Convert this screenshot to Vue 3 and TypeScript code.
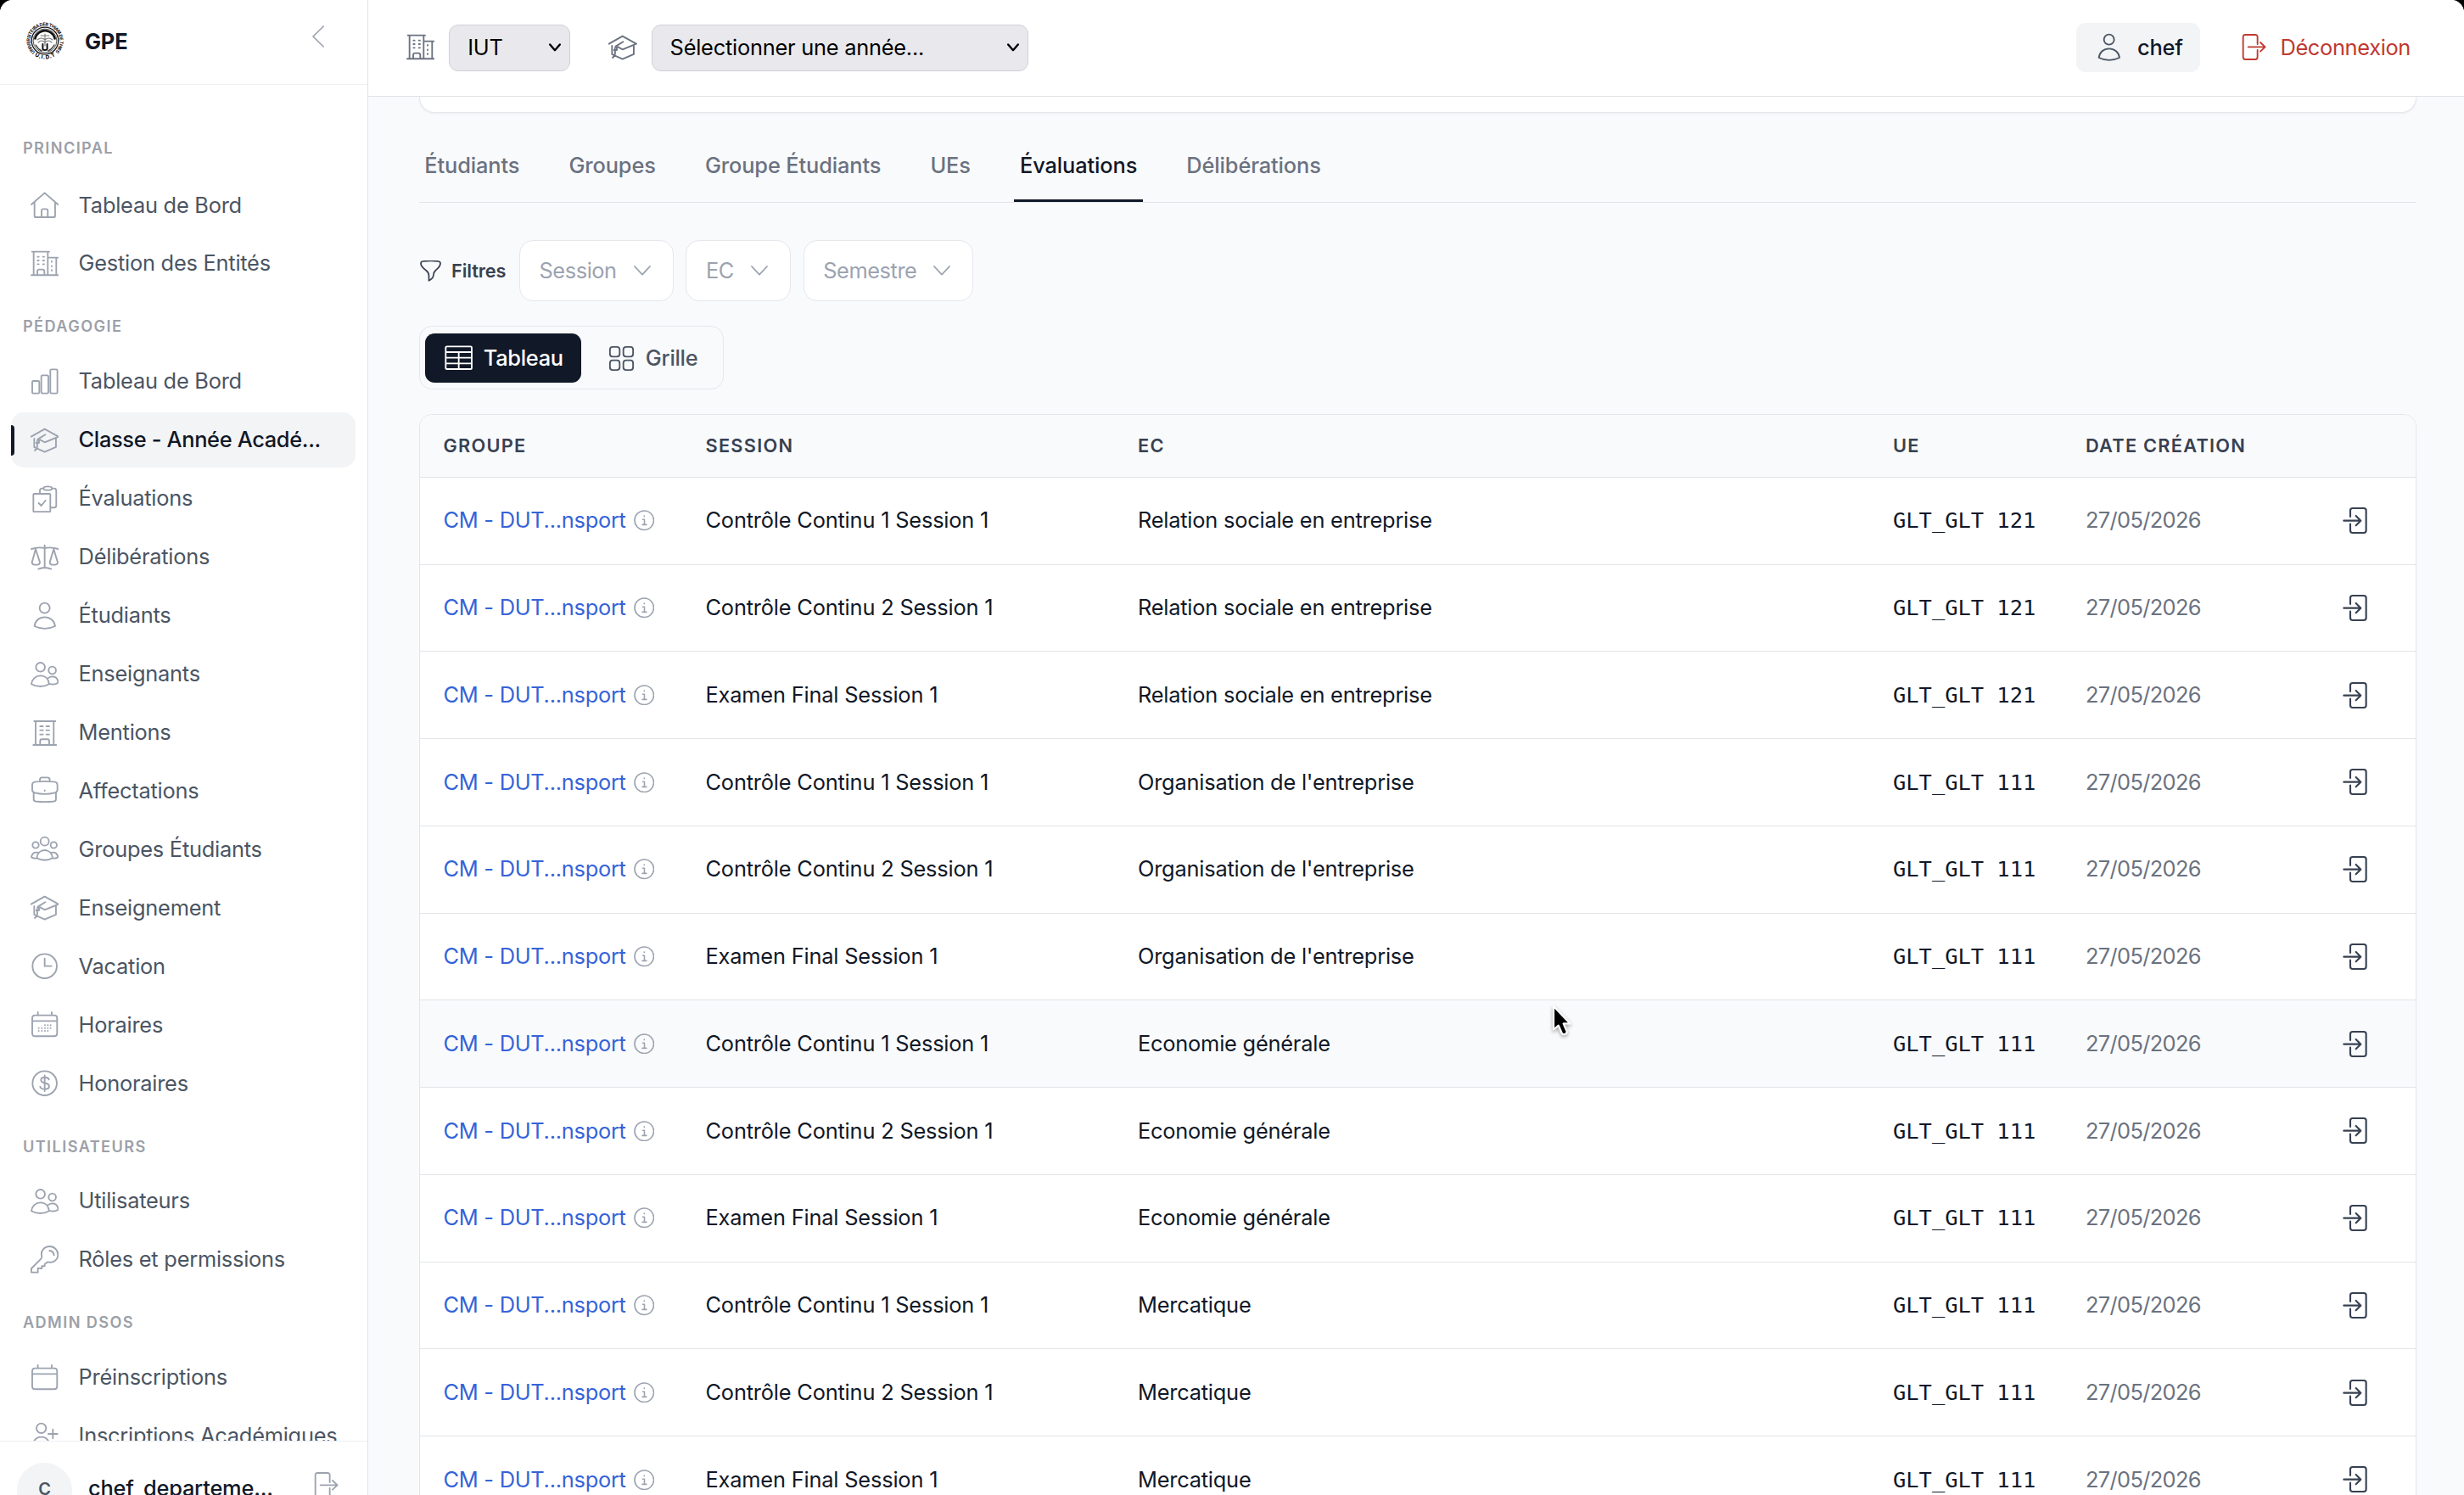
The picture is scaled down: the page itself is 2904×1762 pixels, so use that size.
<script setup lang="ts">
interface NavItem {
  label: string
  icon: string
  active?: boolean
}
interface NavGroup {
  title: string
  items: NavItem[]
}
interface Row {
  session: string
  ec: string
  ue: string
  hovered: boolean
}

// Stroke paths, all drawn on a 100 x 100 grid
const icons: Record<string, string> = {
  home: 'M3 48L50 7L97 48M14 39V90Q14 93 17 93H84Q87 93 87 90V39M39 93V70Q39 64 45 64H55Q61 64 61 70V93',
  buildings:
    'M5 8H66M11 8V91M61 8V91M3 91H98M61 29H97M91 29V91M24 91V78Q24 71 31 71H42Q49 71 49 78V91M25 26H29M44 26H48M25 39H29M44 39H48M25 52H29M44 52H48M75 42V44M75 58V60M75 73V75',
  bars: 'M10 48H27Q31 48 31 52V88Q31 92 27 92H10Q6 92 6 88V52Q6 48 10 48ZM42 28H59Q63 28 63 32V88Q63 92 59 92H42Q38 92 38 88V32Q38 28 42 28ZM74 7H91Q95 7 95 11V88Q95 92 91 92H74Q70 92 70 88V11Q70 7 74 7Z',
  cap: 'M2 38L50 11L99 38L50 58L34 49M13 45V75L50 92L90 75V45M52 31L26 47C20 58 24 64 24 68C24 76 22 82 15 87M20 60H30V50',
  clipboard:
    'M13 33H67Q70 33 70 36V94Q70 97 67 97H13Q10 97 10 94V36Q10 33 13 33ZM29 66L38 75L53 57M33 33V22Q33 14 41 14H46M76 14H83Q91 14 91 22V74Q91 82 83 82H70M46 14C46 5 76 5 76 14C76 22 46 22 46 14Z',
  scale: 'M3 21Q27 13 50 18Q73 13 98 21M50 8V88M28 92Q50 82 73 92M18 22L5 68C5 80 33 80 33 68ZM82 22L68 68C68 80 96 80 96 68Z',
  user: 'M68 23A18 18 0 1 1 32 23A18 18 0 1 1 68 23ZM14 87C16 68 31 55 50 55S85 68 87 87C64 98 37 98 14 87Z',
  users:
    'M51 25A16 16 0 1 1 19 25A16 16 0 1 1 51 25ZM90 36A13 13 0 1 1 64 36A13 13 0 1 1 90 36ZM3 85C5 67 18 55 35 55S64 67 66 85C47 96 22 96 3 85ZM60 65C66 60 71 58 77 58C90 58 97 68 98 80C90 86 77 87 66 84',
  building: 'M13 9H88M18 9V93M82 9V93M10 93H91M34 27H44M56 27H66M34 41H44M56 41H66M34 56H44M56 56H66M34 93V79Q34 73 40 73H60Q66 73 66 79V93',
  briefcase:
    'M33 18V12Q33 4 41 4H60Q68 4 68 12V18M18 19Q50 16 83 19Q95 20 95 30V48Q95 56 86 58Q50 67 15 58Q6 56 6 48V30Q6 20 18 19ZM11 58V81Q11 88 20 89Q50 92 81 89Q90 88 90 81V58M50 49V51',
  group:
    'M65 23A15 15 0 1 1 35 23A15 15 0 1 1 65 23ZM29 36A11 11 0 1 1 7 36A11 11 0 1 1 29 36ZM93 36A11 11 0 1 1 71 36A11 11 0 1 1 93 36ZM22 82C24 64 36 54 50 54S76 64 78 82C62 92 38 92 22 82ZM26 63C12 59 4 68 3 79C8 83 15 84 22 82M74 63C88 59 96 68 97 79C92 83 85 84 78 82',
  clock: 'M93 50A43 43 0 1 1 7 50A43 43 0 1 1 93 50ZM50 23V50H74',
  calendarDots:
    'M16 17H84Q94 17 94 27V81Q94 91 84 91H16Q6 91 6 81V27Q6 17 16 17ZM6 37H94M26 6V17M75 6V17',
  calendar: 'M16 17H84Q94 17 94 27V81Q94 91 84 91H16Q6 91 6 81V27Q6 17 16 17ZM6 37H94M26 6V17M75 6V17',
  dollar: 'M93 50A43 43 0 1 1 7 50A43 43 0 1 1 93 50ZM65 37C62 27 37 26 37 39C37 54 66 45 66 61C66 75 37 74 34 62M50 22V78',
  key: 'M40 38C34 18 50 3 68 3A29 29 0 0 1 97 32C97 51 80 63 61 58L50 66V73H40V81L26 80V95H3V81L35 49Q40 45 40 38ZM67 18Q81 19 83 34',
  userPlus: 'M55 22A17 17 0 1 1 21 22A17 17 0 1 1 55 22ZM8 80C12 62 24 53 38 53S64 62 68 80M79 26V58M63 42H95',
  logout: 'M62 39V14Q62 6 54 6H19Q11 6 11 14V84Q11 93 19 93H54Q62 93 62 84V60M29 49H89M72 33L89 49L72 65',
  enter: 'M33 36V14Q33 6 41 6H81Q89 6 89 14V84Q89 93 81 93H41Q33 93 33 84V62M10 50H70M53 33L70 50L53 67',
  info: 'M96 50A46 46 0 1 1 4 50A46 46 0 1 1 96 50ZM43 46H51V70M41 71H61M50 29V31',
  funnel: 'M4 14Q4 5 14 4Q50 -1 86 4Q96 5 96 14C96 28 86 36 74 46Q64 55 63 72Q62 84 42 95V72Q41 56 30 48C14 36 4 28 4 14Z',
  table: 'M8 10H92Q96 10 96 14V86Q96 90 92 90H8Q4 90 4 86V14Q4 10 8 10ZM4 30H96M4 50H96M4 70H96M50 30V90',
  grid: 'M16 6H32Q43 6 43 17V32Q43 43 32 43H16Q6 43 6 32V17Q6 6 16 6ZM68 6H84Q94 6 94 17V32Q94 43 84 43H68Q57 43 57 32V17Q57 6 68 6ZM16 57H32Q43 57 43 68V83Q43 94 32 94H16Q6 94 6 83V68Q6 57 16 57ZM68 57H84Q94 57 94 68V83Q94 94 84 94H68Q57 94 57 83V68Q57 57 68 57Z',
}

// Day dots of the filled calendar: [x, y] centres
const calendarDots: [number, number][] = [
  [51, 52], [61, 52], [71, 52],
  [29, 62], [40, 62], [51, 62], [61, 62], [71, 62],
  [29, 72], [40, 72], [51, 72], [61, 72],
]

const groups: NavGroup[] = [
  {
    title: 'PRINCIPAL',
    items: [
      { label: 'Tableau de Bord', icon: 'home' },
      { label: 'Gestion des Entités', icon: 'buildings' },
    ],
  },
  {
    title: 'PÉDAGOGIE',
    items: [
      { label: 'Tableau de Bord', icon: 'bars' },
      { label: 'Classe - Année Acadé...', icon: 'cap', active: true },
      { label: 'Évaluations', icon: 'clipboard' },
      { label: 'Délibérations', icon: 'scale' },
      { label: 'Étudiants', icon: 'user' },
      { label: 'Enseignants', icon: 'users' },
      { label: 'Mentions', icon: 'building' },
      { label: 'Affectations', icon: 'briefcase' },
      { label: 'Groupes Étudiants', icon: 'group' },
      { label: 'Enseignement', icon: 'cap' },
      { label: 'Vacation', icon: 'clock' },
      { label: 'Horaires', icon: 'calendarDots' },
      { label: 'Honoraires', icon: 'dollar' },
    ],
  },
  {
    title: 'UTILISATEURS',
    items: [
      { label: 'Utilisateurs', icon: 'users' },
      { label: 'Rôles et permissions', icon: 'key' },
    ],
  },
  {
    title: 'ADMIN DSOS',
    items: [
      { label: 'Préinscriptions', icon: 'calendar' },
      { label: 'Inscriptions Académiques', icon: 'userPlus' },
    ],
  },
]

const tabs = ['Étudiants', 'Groupes', 'Groupe Étudiants', 'UEs', 'Évaluations', 'Délibérations']
const activeTab = 'Évaluations'
const filters = ['Session', 'EC', 'Semestre']
const columns = ['GROUPE', 'SESSION', 'EC', 'UE', 'DATE CRÉATION']

const courses: [string, string][] = [
  ['Relation sociale en entreprise', 'GLT_GLT 121'],
  ["Organisation de l'entreprise", 'GLT_GLT 111'],
  ['Economie générale', 'GLT_GLT 111'],
  ['Mercatique', 'GLT_GLT 111'],
]
const sessions = ['Contrôle Continu 1 Session 1', 'Contrôle Continu 2 Session 1', 'Examen Final Session 1']
const rows: Row[] = courses.flatMap(([ec, ue], c) =>
  sessions.map((session, s) => ({ session, ec, ue, hovered: c * 3 + s === 6 })),
)
</script>

<template>
  <div class="screen">
    <div class="window">
      <aside class="sidebar">
        <div class="brand">
          <svg class="logo" viewBox="-23 -23 46 46">
            <defs>
              <path id="ring-top" d="M-11.5 13.4A17.6 17.6 0 1 1 11.5 13.4" />
              <path id="ring-bottom" d="M-16 14.5A21.6 21.6 0 0 0 16 14.5" />
            </defs>
            <text class="logo-text"><textPath href="#ring-top" textLength="84">UNIVERSITE IBA DER THIAM DE THIES</textPath></text>
            <text class="logo-text strong"><textPath href="#ring-bottom" startOffset="5" textLength="26">U.I.D.T</textPath></text>
            <circle r="15.8" fill="none" stroke="#111" stroke-width="1.3" />
            <circle r="13.9" fill="none" stroke="#222" stroke-width="0.8" />
            <path d="M-11.6 -2.5A11.9 11.9 0 0 1 11.6 -2.5" fill="none" stroke="#111" stroke-width="2.6" stroke-dasharray="2.2 0.8" />
            <path d="M-9 -1Q-4 -5 0 -1Q4 -5 9 -1M-8 2Q-4 -2 0 2Q4 -2 8 2M0 -8V6M-5 -6L5 -6" fill="none" stroke="#777" stroke-width="1.1" />
            <path d="M-2.6 4V9.5Q-2.6 11 0 11T2.6 9.5V4" fill="none" stroke="#111" stroke-width="2" />
            <path d="M-11 5Q-8 10 -4 12M11 5Q8 10 4 12" fill="none" stroke="#333" stroke-width="1.4" />
          </svg>
          <span class="brand-name">GPE</span>
          <svg class="collapse" viewBox="0 0 14 26"><path d="M13.2 1L1 13L13.2 25" /></svg>
        </div>
        <nav class="nav">
          <section v-for="g in groups" :key="g.title" class="group">
            <h2 class="group-title">{{ g.title }}</h2>
            <a v-for="item in g.items" :key="item.label" class="item" :class="{ active: item.active }">
              <svg class="icon" viewBox="0 0 100 100">
                <path :d="icons[item.icon]" />
                <template v-if="item.icon === 'calendarDots'">
                  <circle v-for="([x, y], i) in calendarDots" :key="i" class="dot" :cx="x" :cy="y" r="3" />
                </template>
              </svg>
              <span>{{ item.label }}</span>
            </a>
          </section>
        </nav>
        <div class="account">
          <span class="avatar">C</span>
          <span class="account-name">chef_departeme...</span>
          <svg class="icon" viewBox="0 0 100 100"><path :d="icons.logout" /></svg>
        </div>
      </aside>

      <div class="main">
        <header class="topbar">
          <svg class="icon" viewBox="0 0 100 100"><path :d="icons.buildings" /></svg>
          <div class="select short">
            <span>IUT</span>
            <svg class="caret" viewBox="0 0 14 10"><path d="M1.2 1.5L7 8.2L12.8 1.5" /></svg>
          </div>
          <svg class="icon cap" viewBox="0 0 100 100"><path :d="icons.cap" /></svg>
          <div class="select long">
            <span>Sélectionner une année...</span>
            <svg class="caret" viewBox="0 0 14 10"><path d="M1.2 1.5L7 8.2L12.8 1.5" /></svg>
          </div>
          <div class="spacer"></div>
          <div class="user-chip">
            <svg class="icon" viewBox="0 0 100 100"><path :d="icons.user" /></svg>
            <span>chef</span>
          </div>
          <div class="logout">
            <svg class="icon" viewBox="0 0 100 100"><path :d="icons.logout" /></svg>
            <span>Déconnexion</span>
          </div>
        </header>

        <main class="content">
          <div class="card-end"></div>
          <div class="tabs">
            <a v-for="t in tabs" :key="t" class="tab" :class="{ current: t === activeTab }">{{ t }}</a>
          </div>
          <div class="filters">
            <svg class="funnel" viewBox="0 0 100 100"><path :d="icons.funnel" /></svg>
            <span class="filters-label">Filtres</span>
            <div v-for="f in filters" :key="f" class="filter">
              <span>{{ f }}</span>
              <svg class="chevron" viewBox="0 0 20 12"><path d="M1 1L10 10.6L19 1" /></svg>
            </div>
          </div>
          <div class="views">
            <div class="view on">
              <svg class="icon" viewBox="0 0 100 100"><path :d="icons.table" /></svg>
              <span>Tableau</span>
            </div>
            <div class="view">
              <svg class="icon grid-icon" viewBox="0 0 100 100"><path :d="icons.grid" /></svg>
              <span>Grille</span>
            </div>
          </div>
          <div class="table">
            <div class="tr head">
              <span v-for="c in columns" :key="c">{{ c }}</span>
            </div>
            <div v-for="(r, i) in rows" :key="i" class="tr row" :class="{ hovered: r.hovered }">
              <span class="group-cell">
                <a>CM - DUT...nsport</a>
                <svg class="info" viewBox="0 0 100 100"><path :d="icons.info" /></svg>
              </span>
              <span>{{ r.session }}</span>
              <span class="ec">{{ r.ec }}</span>
              <span class="mono">{{ r.ue }}</span>
              <span class="date">27/05/2026</span>
              <svg class="icon enter" viewBox="0 0 100 100"><path :d="icons.enter" /></svg>
            </div>
          </div>
        </main>
      </div>

      <svg class="pointer" viewBox="0 0 24 38">
        <path d="M3 2V29.5L8.8 24.6L13 34.2Q14.8 36 17.6 34.2Q19.4 32.6 18.4 31L14.6 22.4H22.6Z" />
      </svg>
    </div>
  </div>
</template>

<style>
body {
  background: #000;
}
</style>

<style scoped>
.screen {
  height: 1762px;
  overflow: hidden;
  background: #000;
  font-family: Inter, 'Liberation Sans', sans-serif;
  font-size: 25.41px;
  line-height: 1.2;
  letter-spacing: -0.2px;
  color: #111827;
}
.window {
  position: relative;
  display: flex;
  height: 1762px;
  overflow: hidden;
  border-radius: 15px 15px 0 0;
  background: #f9fafc;
}
svg path {
  stroke-linecap: round;
  stroke-linejoin: round;
}
.icon {
  flex: none;
  width: 33.3px;
  height: 33.3px;
  fill: none;
  stroke: currentColor;
  stroke-width: 5.6;
}
.dot {
  fill: currentColor;
  stroke: none;
}

/* Sidebar */
.sidebar {
  flex: none;
  box-sizing: border-box;
  display: flex;
  flex-direction: column;
  width: 434px;
  height: 1814px;
  border-right: 1px solid #dfe2e7;
  background: #fff;
}
.brand {
  flex: none;
  display: flex;
  align-items: flex-start;
  box-sizing: border-box;
  height: 100px;
  padding: 25px 51px 0 30px;
  border-bottom: 1px solid #eff0f2;
}
.logo {
  width: 46px;
  height: 46px;
}
.logo-text {
  font-size: 5.4px;
  font-weight: 700;
  letter-spacing: 0;
  fill: #111;
}
.logo-text.strong {
  font-size: 6.4px;
  font-weight: 800;
}
.brand-name {
  margin: 9px auto 0 24px;
  font-weight: 700;
}
.collapse {
  width: 14px;
  height: 26px;
  margin-top: 5px;
  fill: none;
  stroke: #9ca3af;
  stroke-width: 1.7;
}
.nav {
  flex: 1;
  min-height: 0;
  overflow: hidden;
  padding: 62.6px 14px 0 13px;
}
.group {
  padding-bottom: 26.4px;
}
.group-title {
  margin: 0 0 24.5px;
  padding-left: 14px;
  height: 22px;
  font-size: 18.15px;
  line-height: 22px;
  font-weight: 600;
  letter-spacing: 1.4px;
  color: #9ca0a8;
}
.group:not(:first-child) .group-title {
  margin-bottom: 21.4px;
}
.item {
  position: relative;
  display: flex;
  align-items: center;
  gap: 23.6px;
  height: 65.34px;
  margin-bottom: 3.63px;
  padding-left: 22.7px;
  border-radius: 15px;
  color: #4b5563;
  letter-spacing: -0.25px;
  white-space: nowrap;
}
.item .icon {
  color: #9ca3af;
}
.item.active {
  background: #f3f4f6;
  color: #111827;
  font-weight: 500;
  letter-spacing: -0.34px;
}
.item.active::before {
  content: '';
  position: absolute;
  left: 0;
  top: 15px;
  width: 4px;
  height: 36px;
  border-radius: 0 4px 4px 0;
  background: #111827;
}
.account {
  flex: none;
  display: flex;
  align-items: center;
  box-sizing: border-box;
  height: 116px;
  padding: 0 32px 0 20px;
  border-top: 1px solid #eceef1;
}
.avatar {
  flex: none;
  width: 65px;
  height: 65px;
  border-radius: 50%;
  background: #f3f4f6;
  color: #4b5563;
  font-size: 20px;
  line-height: 63px;
  font-weight: 600;
  text-align: center;
}
.account-name {
  margin: 0 auto 4px 19px;
  font-weight: 500;
}
.account .icon {
  color: #9ca3af;
  margin-bottom: 12px;
}

/* Top bar */
.main {
  flex: 1;
  min-width: 0;
}
.topbar {
  display: flex;
  align-items: center;
  box-sizing: border-box;
  height: 114px;
  padding: 0 63px 1px 45px;
  border-bottom: 1px solid #e0e2e5;
  background: #fff;
  color: #6b7280;
}
.select {
  display: flex;
  align-items: center;
  justify-content: space-between;
  box-sizing: border-box;
  height: 55px;
  margin-left: 17px;
  padding: 0 10px 0 21px;
  border: 1px solid #cfcfd5;
  border-radius: 11px;
  background: #e9e9ed;
  color: #000;
  letter-spacing: -0.25px;
}
.short {
  width: 143px;
}
.long {
  width: 444px;
}
.cap {
  margin-left: 45px;
}
.caret {
  width: 14px;
  height: 10px;
  fill: none;
  stroke: #000;
  stroke-width: 2.4;
}
.spacer {
  flex: 1;
}
.user-chip {
  display: flex;
  align-items: center;
  gap: 16.5px;
  box-sizing: border-box;
  width: 146px;
  height: 58px;
  padding-left: 22px;
  border-radius: 11px;
  background: #f3f4f6;
  color: #111827;
  font-weight: 500;
}
.user-chip .icon {
  color: #4b5563;
}
.logout {
  display: flex;
  align-items: center;
  gap: 14px;
  margin-left: 47px;
  color: #c0392f;
  letter-spacing: -0.35px;
}

/* Content */
.content {
  padding: 0 56.5px 0 59.5px;
}
.card-end {
  box-sizing: border-box;
  height: 18.5px;
  border: 1px solid #e5e7eb;
  border-top: 0;
  border-radius: 0 0 18px 18px;
  background: #fff;
  box-shadow: 0 1px 3px rgba(0, 0, 0, 0.06);
}
.tabs {
  display: flex;
  gap: 44px;
  box-sizing: border-box;
  height: 106.5px;
  border-bottom: 1px solid #e2e4e8;
}
.tab {
  box-sizing: border-box;
  height: 105.5px;
  padding: 47.5px 7.3px 0 6.8px;
  font-weight: 500;
  letter-spacing: -0.13px;
  color: #6b7280;
}
.tab.current {
  border-bottom: 3px solid #111827;
  color: #111827;
}
.filters {
  display: flex;
  align-items: center;
  margin-top: 44px;
  height: 72px;
}
.funnel {
  width: 25px;
  height: 25px;
  margin-left: 1.5px;
  fill: none;
  stroke: #374151;
  stroke-width: 7;
}
.filters-label {
  width: 80px;
  margin-left: 12px;
  font-size: 21.78px;
  font-weight: 600;
  letter-spacing: -0.1px;
  color: #374151;
}
.filter {
  display: flex;
  align-items: center;
  box-sizing: border-box;
  height: 72px;
  margin-right: 14.8px;
  padding: 0 26px 0 22.5px;
  border: 1px solid #e5e7eb;
  border-radius: 16px;
  background: #fff;
  color: #9ca3af;
  letter-spacing: -0.45px;
}
.chevron {
  width: 20px;
  height: 12px;
  margin-left: 20px;
  fill: none;
  stroke: #9ca3af;
  stroke-width: 1.8;
}
.views {
  display: inline-flex;
  box-sizing: border-box;
  height: 75px;
  margin-top: 29px;
  padding: 8px 7.5px 8px 6.5px;
  border: 1px solid #e5e7eb;
  border-radius: 15px;
  vertical-align: top;
}
.view {
  display: flex;
  align-items: center;
  gap: 13px;
  height: 58px;
  padding: 0 22.5px;
  border-radius: 11px;
  color: #4b5563;
  font-weight: 500;
  letter-spacing: -0.3px;
}
.view.on {
  padding-right: 21.5px;
  background: #111827;
  color: #fff;
  margin-right: 9px;
}
.grid-icon {
  width: 31px;
  height: 31px;
  stroke-width: 6;
}

/* Table */
.table {
  margin-top: 28.5px;
  border: 1px solid #e3e5e9;
  border-radius: 15px 15px 0 0;
  background: #fff;
  overflow: hidden;
}
.tr {
  display: grid;
  grid-template-columns: 309px 509.5px 890px 227px 300.5px 34px;
  align-items: center;
  box-sizing: border-box;
  padding-left: 28px;
  white-space: nowrap;
}
.head {
  height: 74.3px;
  border-bottom: 1px solid #e0e2e6;
  background: #f9fafc;
  font-size: 21.78px;
  font-weight: 600;
  letter-spacing: 1.25px;
  color: #374151;
}
.row {
  height: 102.75px;
  border-bottom: 1px solid #e3e5e8;
}
.row.hovered {
  background: #f9fafc;
}
.group-cell {
  display: flex;
  align-items: center;
  gap: 9px;
  color: #3563d8;
  letter-spacing: -0.27px;
}
.ec {
  letter-spacing: -0.23px;
}
.info {
  width: 24.5px;
  height: 24.5px;
  fill: none;
  stroke: #9ca3af;
  stroke-width: 6.4;
}
.mono {
  font-family: 'DejaVu Sans Mono', 'Liberation Mono', monospace;
  letter-spacing: 0;
}
.date {
  color: #6b7280;
  letter-spacing: -0.65px;
}
.enter {
  color: #374151;
  stroke-width: 6.4;
}

/* Mouse pointer lies over the table */
.pointer {
  position: absolute;
  left: 1828px;
  top: 1184px;
  width: 24px;
  height: 38px;
  overflow: visible;
  fill: #000;
  stroke: #fff;
  stroke-width: 2.2;
  filter: drop-shadow(0 2px 2px rgba(0, 0, 0, 0.35));
}
</style>
